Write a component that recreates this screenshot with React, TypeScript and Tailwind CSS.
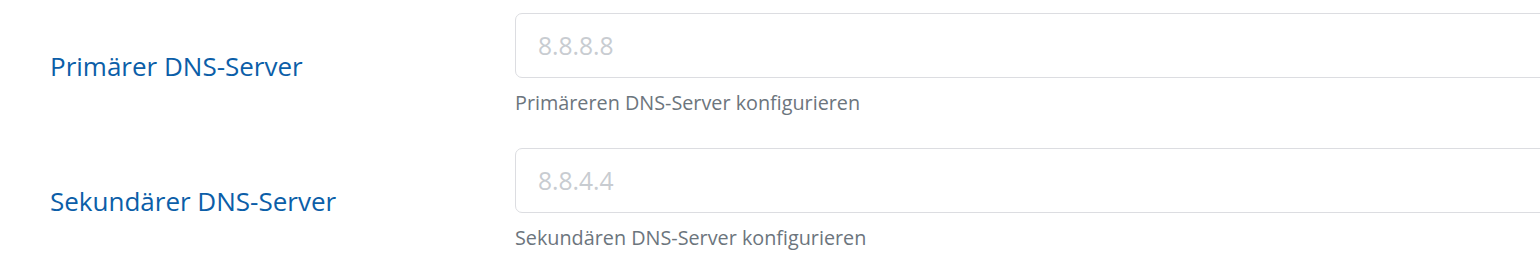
const rows = [
  {
    label: "Primärer DNS-Server",
    placeholder: "8.8.8.8",
    help: "Primäreren DNS-Server konfigurieren",
  },
  {
    label: "Sekundärer DNS-Server",
    placeholder: "8.8.4.4",
    help: "Sekundären DNS-Server konfigurieren",
  },
];

export default function App() {
  return (
    <div
      className="w-[1540px] h-[265px] overflow-hidden bg-white pt-[13px]"
      style={{ fontFamily: '"Open Sans", "Noto Sans", sans-serif' }}
    >
      {rows.map((row) => (
        <div key={row.label} className="flex h-[135px]">
          <label className="w-[515px] shrink-0 pl-[50px] pt-[36px] text-[26px] leading-[34px] text-[#0b5ea8]">
            {row.label}
          </label>
          <div className="w-[1100px] shrink-0">
            <input
              type="text"
              placeholder={row.placeholder}
              className="block w-full h-[65px] rounded-[7px] border border-[#dcdde1] bg-white px-[22px] text-[24.6px] text-gray-700 placeholder:text-[#c8ccd1] outline-none"
            />
            <div className="mt-[12px] text-[19.8px] leading-[26px] text-[#6c757d]">
              {row.help}
            </div>
          </div>
        </div>
      ))}
    </div>
  );
}
